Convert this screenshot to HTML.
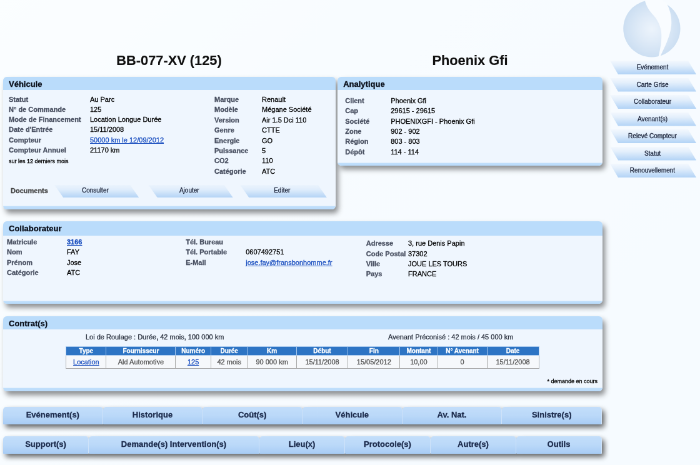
<!DOCTYPE html>
<html><head><meta charset="utf-8">
<style>
html,body{margin:0;padding:0;}
body{width:700px;height:465px;overflow:hidden;background:#f8fcff;font-family:"Liberation Sans",sans-serif;}
#root{position:absolute;left:0;top:0;width:1120px;height:744px;transform:scale(0.625);transform-origin:0 0;will-change:transform;background:linear-gradient(135deg,#fbfeff 0%,#f8fcff 40%,#f6fbff 100%);font-size:11px;color:#000;-webkit-text-stroke:0.3px;}
.abs{position:absolute;white-space:nowrap;}
.title{position:absolute;-webkit-text-stroke:0.15px;font-weight:bold;font-size:21.8px;line-height:26px;text-align:center;color:#111;}
.panel{position:absolute;background:#eff6fe;border-radius:6px 6px 6px 6px;box-shadow:4px 6px 8px rgba(0,0,0,0.44);overflow:hidden;}
.panel .hd{position:absolute;left:0;top:0;right:0;height:21px;background:#badcfb;font-weight:bold;font-size:13px;line-height:21px;color:#0a0f1a;}
.panel .hd span{position:absolute;left:9px;top:1.4px;}
.panel .ft{position:absolute;left:0;right:0;bottom:0;height:5.5px;background:linear-gradient(#eff6fe 0%,#c0dffb 25%,#b9dbfb 100%);}
.col{position:absolute;white-space:nowrap;line-height:16.1px;font-size:11px;}
.lb{font-weight:bold;color:#4a5162;}
a{color:#1a4fc0;text-decoration:underline;}
.sm{font-size:9px;}

.pg{position:absolute;box-sizing:border-box;padding-right:5px;height:20px;width:135px;background:linear-gradient(#eaf3fd 0%,#e1eefc 35%,#b4d4f6 100%);clip-path:polygon(0 0,calc(100% - 14px) 0,100% 100%,14px 100%);text-align:center;line-height:17px;font-size:10px;color:#1a2238;}
.mb{position:absolute;box-sizing:border-box;padding-right:2px;left:976px;height:22px;width:138px;background:linear-gradient(#f3f8fe 0%,#e3effc 35%,#b2d3f6 100%);clip-path:polygon(0 0,125px 0,100% 100%,13px 100%);text-align:center;line-height:22px;font-size:10px;color:#1a2238;}
table.ct{position:absolute;left:100.4px;top:48.1px;border-collapse:collapse;table-layout:fixed;font-size:11px;}
table.ct th{background:#2d74c4;color:#fff;font-weight:bold;height:13.4px;line-height:13px;padding:0;border:1px solid #a8c9ee;font-size:10px;}
table.ct td{background:#f6f8fb;color:#555;height:20px;line-height:20px;padding:0;border:1px solid #a8a8a8;text-align:center;}
.tabs{position:absolute;left:5px;width:958px;height:27px;display:flex;filter:drop-shadow(4px 5px 4px rgba(0,0,0,0.6));}
.tabs div{box-sizing:border-box;height:27.6px;border-radius:5px 5px 1px 1px;background:linear-gradient(#c3defb 0%,#bbd9f9 50%,#a8ccf5 100%);border-right:1px solid #cfe3fa;border-left:0;text-align:center;font-weight:bold;font-size:13px;line-height:25.4px;color:#1c2b4c;}
</style></head><body>
<div id="root">

<div class="title" style="left:5px;width:531px;top:84.4px;">BB-077-XV (125)</div>
<div class="title" style="left:540px;width:424px;top:84.4px;">Phoenix Gfi</div>

<!-- Vehicule -->
<div class="panel" style="left:5px;top:123px;width:531.5px;height:211.6px;">
 <div class="hd"><span>Véhicule</span></div>
 <div class="ft"></div>
 <div class="col lb" style="left:9px;top:27.8px;line-height:16.2px">Statut<br>N° de Commande<br>Mode de Financement<br>Date d'Entrée<br>Compteur<br>Compteur Annuel<br><span class="sm" style="font-weight:normal;color:#000;position:relative;top:1.2px">sur les 12 derniers mois</span></div>
 <div class="col" style="left:139px;top:27.8px;line-height:16.2px">Au Parc<br>125<br>Location Longue Durée<br>15/11/2008<br><a>50000 km le 12/09/2012</a><br>21170 km</div>
 <div class="col lb" style="left:338px;top:28px;line-height:16.37px">Marque<br>Modèle<br>Version<br>Genre<br>Energie<br>Puissance<br>CO2<br>Catégorie</div>
 <div class="col" style="left:414px;top:28px;line-height:16.37px">Renault<br>Mégane Société<br>Air 1.5 Dci 110<br>CTTE<br>GO<br>5<br>110<br>ATC</div>
 <div class="col lb" style="left:11px;top:173.6px;left:12px;font-size:11px;color:#444">Documents</div>
 <div class="pg" style="left:82.4px;top:173.3px;">Consulter</div>
 <div class="pg" style="left:232.8px;top:173.3px;">Ajouter</div>
 <div class="pg" style="left:379.5px;width:138.5px;top:173.3px;">Editer</div>
</div>

<!-- Analytique -->
<div class="panel" style="left:540.2px;top:123px;width:423.6px;height:142.3px;">
 <div class="hd"><span>Analytique</span></div>
 <div class="ft"></div>
 <div class="col lb" style="left:12px;top:29.8px;line-height:16.4px">Client<br>Cap<br>Société<br>Zone<br>Région<br>Dépôt</div>
 <div class="col" style="left:85px;top:29.8px;line-height:16.4px">Phoenix Gfi<br>29615 - 29615<br>PHOENIXGFI - Phoenix Gfi<br>902 - 902<br>803 - 803<br>114 - 114</div>
</div>

<!-- Collaborateur -->
<div class="panel" style="left:5px;top:354px;width:959px;height:132px;">
 <div class="hd" style="height:22.5px;line-height:22px;"><span>Collaborateur</span></div>
 <div class="ft"></div>
 <div class="col lb" style="left:6px;top:24.9px;line-height:16.37px">Matricule<br>Nom<br>Prénom<br>Catégorie</div>
 <div class="col" style="left:102px;top:24.9px;line-height:16.37px"><a style="font-weight:bold">3166</a><br>FAY<br>Jose<br>ATC</div>
 <div class="col lb" style="left:292.2px;top:24.9px;line-height:16.37px">Tél. Bureau<br>Tél. Portable<br>E-Mail</div>
 <div class="col" style="left:388.2px;top:24.9px;line-height:16.37px"><br>0607492751<br><a>jose.fay@fransbonhomme.fr</a></div>
 <div class="col lb" style="left:580.8px;top:27.1px;line-height:16.4px">Adresse<br>Code Postal<br>Ville<br>Pays</div>
 <div class="col" style="left:648px;top:27.1px;line-height:16.4px">3, rue Denis Papin<br>37302<br>JOUE LES TOURS<br>FRANCE</div>
</div>

<!-- Contrats -->
<div class="panel" style="left:5px;top:505.8px;width:959px;height:120px;">
 <div class="hd"><span>Contrat(s)</span></div>
 <div class="ft"></div>
 <div class="abs" style="left:132px;top:26.9px;color:#2c3340">Loi de Roulage : Durée, 42 mois, 100 000 km</div>
 <div class="abs" style="left:616px;top:26.9px;color:#2c3340">Avenant Préconisé : 42 mois / 45 000 km</div>
<table class="ct"><colgroup><col style="width:64px"><col style="width:111px"><col style="width:56.5px"><col style="width:58.7px"><col style="width:78.1px"><col style="width:82.7px"><col style="width:82.9px"><col style="width:60.3px"><col style="width:79.1px"><col style="width:82.9px"></colgroup><tr><th>Type</th><th>Fournisseur</th><th>Numéro</th><th>Durée</th><th>Km</th><th>Début</th><th>Fin</th><th>Montant</th><th>N° Avenant</th><th>Date</th></tr><tr><td><a>Location</a></td><td>Ald Automotive</td><td><a>125</a></td><td>42 mois</td><td>90 000 km</td><td>15/11/2008</td><td>15/05/2012</td><td>10,00</td><td>0</td><td>15/11/2008</td></tr></table>
 <div class="abs sm" style="right:8px;top:99.7px;">* demande en cours</div>
</div>

<svg class="abs" style="left:984px;top:0px;" width="120" height="96" viewBox="0 0 581 465">
<defs><radialGradient id="lg" gradientUnits="userSpaceOnUse" cx="285" cy="225" r="230"><stop offset="0" stop-color="#edf4fc"/><stop offset="0.45" stop-color="#dfebf8"/><stop offset="1" stop-color="#cbdef2"/></radialGradient></defs>
<circle cx="285" cy="222" r="221" fill="url(#lg)"/>
<path d="M228 -10 C238 40 262 80 297 118 C328 152 348 192 357 240 C366 300 352 380 333 452 L345 452 C374 380 425 300 436 200 C442 130 425 70 398 22 C380 0 340 -10 300 -10 Z" fill="#f9fcff"/>
</svg>
<div class="mb" style="top:97.0px;">Evénement</div>
<div class="mb" style="top:124.5px;">Carte Grise</div>
<div class="mb" style="top:152.0px;">Collaborateur</div>
<div class="mb" style="top:179.5px;">Avenant(s)</div>
<div class="mb" style="top:207.0px;">Relevé Compteur</div>
<div class="mb" style="top:234.5px;">Statut</div>
<div class="mb" style="top:262.0px;">Renouvellement</div>
<div class="tabs" style="top:651px;"><div style="flex:1">Evénement(s)</div><div style="flex:1">Historique</div><div style="flex:1">Coût(s)</div><div style="flex:1">Véhicule</div><div style="flex:1">Av. Nat.</div><div style="flex:1">Sinistre(s)</div></div>
<div class="tabs" style="top:698.4px;"><div style="flex:1">Support(s)</div><div style="flex:2">Demande(s) Intervention(s)</div><div style="flex:1">Lieu(x)</div><div style="flex:1">Protocole(s)</div><div style="flex:1">Autre(s)</div><div style="flex:1">Outils</div></div>

</div>
</body></html>
